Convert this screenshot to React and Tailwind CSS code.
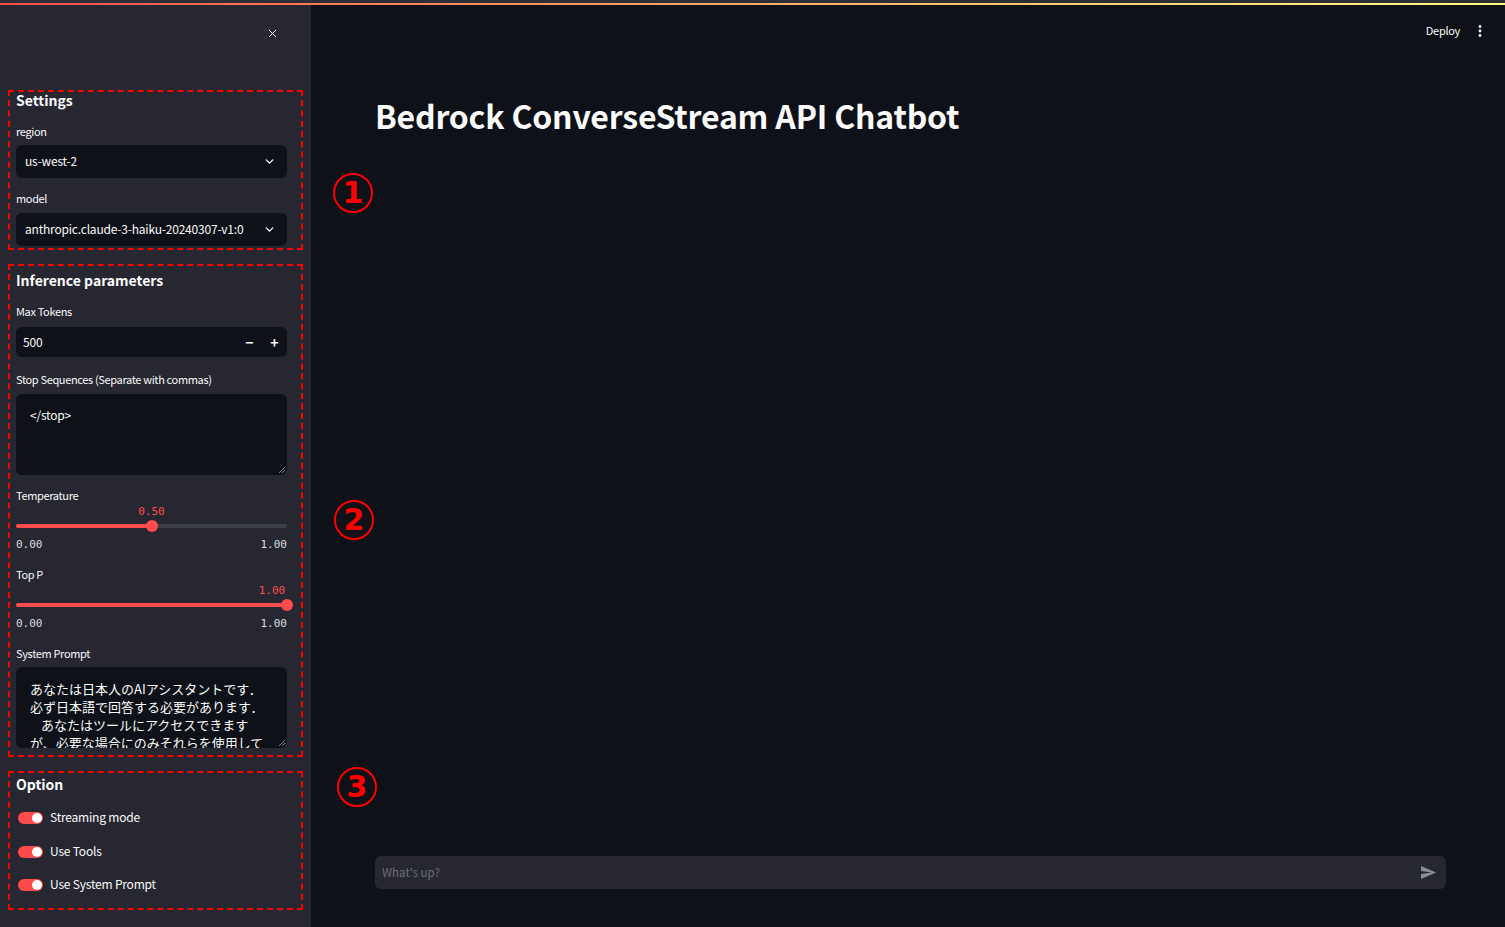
import { X, ChevronDown } from 'lucide-react';

const labelClass = "h-[16px] pb-[2px] flex items-center text-[11px] tracking-[-0.35px] text-[#fafafa]";
const headClass = "h-[18px] pb-[2px] flex items-center text-[14px] font-semibold text-[#fafafa]";
const boxClass = "mx-[8px] border-2 border-dashed border-[#ff0000] pl-[6px] pr-[14px]";
const bodyText = "text-[12px] tracking-[-0.2px] text-[#fafafa]";

function Select({ value, className = '' }) {
  return (
    <div className={`h-[33px] rounded-[6px] bg-[#0e1117] flex items-center justify-between pl-[9px] pr-[11px] ${className}`}>
      <span className={`${bodyText} whitespace-nowrap pb-[1px]`}>{value}</span>
      <ChevronDown size={13} strokeWidth={2.5} className="text-[#fafafa] shrink-0" />
    </div>
  );
}

function Slider({ value, label }) {
  const pct = value * 100;
  return (
    <div>
      <div className="relative h-[14px] mt-[1px]">
        <span
          className="absolute top-0 -translate-x-1/2 text-[11px] leading-[14px] text-[#ff4b4b] font-['DejaVu_Sans_Mono',monospace]"
          style={{ left: value === 1 ? 'calc(100% - 15px)' : `${pct}%` }}
        >
          {label}
        </span>
      </div>
      <div className="relative h-[12px] mt-[1px] flex items-center">
        <div className="w-full h-[4px] rounded-full bg-[#3d3f48]" />
        <div className="absolute left-0 h-[4px] rounded-full bg-[#ff4b4b]" style={{ width: `${pct}%` }} />
        <div className="absolute w-[12px] h-[12px] rounded-full bg-[#ff4b4b] -translate-x-1/2" style={{ left: `${pct}%` }} />
      </div>
      <div className="h-[14px] mt-[5px] flex justify-between text-[11px] text-[#dcdde0] font-['DejaVu_Sans_Mono',monospace]">
        <span>0.00</span>
        <span>1.00</span>
      </div>
    </div>
  );
}

function Toggle({ label, className = '' }) {
  return (
    <div className={`h-[20px] flex items-center ${className}`}>
      <div className="ml-[2px] w-[25px] h-[12px] rounded-full bg-[#ff4b4b] flex items-center justify-end pr-[1px]">
        <div className="w-[10px] h-[10px] rounded-full bg-white" />
      </div>
      <span className={`ml-[7px] pb-[2px] ${bodyText}`}>{label}</span>
    </div>
  );
}

function Resize() {
  return (
    <svg width="6" height="6" viewBox="0 0 6 6" className="absolute right-[2px] bottom-[2px]">
      <path d="M6 0L0 6M6 3L3 6" stroke="#9a9ca3" strokeWidth="0.8" />
    </svg>
  );
}

function Mark({ n, className = '' }) {
  return (
    <div className={`absolute w-[40px] h-[40px] rounded-full border-2 border-[#ff0000] flex items-center justify-center text-[30px] leading-none font-bold text-[#ff0000] font-['DejaVu_Sans',sans-serif] ${className}`}>
      {n}
    </div>
  );
}

export default function App() {
  return (
    <div className="relative w-[1505px] h-[927px] overflow-hidden flex bg-[#0e1117] font-['Noto_Sans_CJK_JP','Noto_Sans',sans-serif]">
      <div className="absolute top-0 left-0 right-0 z-10">
        <div className="h-[3px] bg-[#2e2f36]" />
        <div className="h-[2px] bg-gradient-to-r from-[#ff4b4b] to-[#fffd80]" />
      </div>

      <aside className="w-[311px] h-full bg-[#262730] flex flex-col shrink-0">
        <div className="h-[90px] flex justify-end items-start pt-[27px] pr-[32px]">
          <X size={13} strokeWidth={1.8} className="text-[#fafafa]" />
        </div>

        <div className={`${boxClass} pb-[2px]`}>
          <div className={headClass}>Settings</div>
          <div className={`${labelClass} mt-[14px]`}>region</div>
          <Select value="us-west-2" className="mt-[5px]" />
          <div className={`${labelClass} mt-[13px]`}>model</div>
          <Select value="anthropic.claude-3-haiku-20240307-v1:0" className="mt-[6px]" />
        </div>

        <div className={`${boxClass} mt-[14px] pb-[7px]`}>
          <div className={`${headClass} mt-[6px]`}>Inference parameters</div>
          <div className={`${labelClass} mt-[14px]`}>Max Tokens</div>
          <div className="mt-[7px] h-[30px] rounded-[6px] bg-[#0e1117] flex items-center">
            <span className={`flex-1 pl-[7px] pb-[1px] ${bodyText}`}>500</span>
            <span className="w-[25px] text-center text-[14px] font-bold text-[#fafafa]">−</span>
            <span className="w-[25px] text-center text-[14px] font-bold text-[#fafafa]">+</span>
          </div>
          <div className={`${labelClass} mt-[15px]`}>Stop Sequences (Separate with commas)</div>
          <div className={`relative mt-[6px] h-[81px] rounded-[6px] bg-[#0e1117] pl-[14px] pt-[12px] leading-[18px] ${bodyText}`}>
            &lt;/stop&gt;
            <Resize />
          </div>
          <div className={`${labelClass} mt-[13px]`}>Temperature</div>
          <Slider value={0.5} label="0.50" />
          <div className={`${labelClass} mt-[16px]`}>Top P</div>
          <Slider value={1} label="1.00" />
          <div className={`${labelClass} mt-[16px]`}>System Prompt</div>
          <div className="relative mt-[5px] h-[81px] rounded-[6px] bg-[#0e1117] overflow-hidden pl-[14px] pt-[13px] text-[13px] leading-[18px] text-[#fafafa] whitespace-nowrap">
            <div>あなたは日本人のAIアシスタントです．</div>
            <div>必ず日本語で回答する必要があります．</div>
            <div className="pl-[11px]">あなたはツールにアクセスできます</div>
            <div>が、必要な場合にのみそれらを使用して</div>
            <Resize />
          </div>
        </div>

        <div className={`${boxClass} mt-[14px] pb-[13px]`}>
          <div className={`${headClass} mt-[3px]`}>Option</div>
          <Toggle label="Streaming mode" className="mt-[14px]" />
          <Toggle label="Use Tools" className="mt-[14px]" />
          <Toggle label="Use System Prompt" className="mt-[13px]" />
        </div>
      </aside>

      <main className="relative flex-1 h-full flex flex-col">
        <div className="h-[62px] flex justify-end items-center pr-[20px] gap-[18px] pb-[1px]">
          <span className="text-[11px] tracking-[-0.3px] text-[#fafafa]">Deploy</span>
          <svg width="4" height="14" viewBox="0 0 4 14" className="mr-[3px]">
            <circle cx="2" cy="2.5" r="1.4" fill="#fafafa" />
            <circle cx="2" cy="7" r="1.4" fill="#fafafa" />
            <circle cx="2" cy="11.5" r="1.4" fill="#fafafa" />
          </svg>
        </div>

        <h1 className="mt-[33px] pl-[64px] h-[40px] flex items-center text-[32px] tracking-[-0.2px] font-bold text-[#fafafa]">
          Bedrock ConverseStream API Chatbot
        </h1>

        <div className="flex-1" />

        <div className="pl-[64px] pr-[59px] pb-[38px]">
          <div className="h-[33px] rounded-[6px] bg-[#262730] flex items-center justify-between pl-[7px] pr-[10px]">
            <span className="text-[11.5px] text-[#6c6e77]">What's up?</span>
            <svg width="15" height="13" viewBox="2 3 21 18">
              <path d="M2.01 21L23 12 2.01 3 2 10l15 2-15 2z" fill="#8c8e96" />
            </svg>
          </div>
        </div>

        <Mark n="1" className="left-[22px] top-[173px]" />
        <Mark n="2" className="left-[23px] top-[500px]" />
        <Mark n="3" className="left-[26px] top-[767px]" />
      </main>
    </div>
  );
}
